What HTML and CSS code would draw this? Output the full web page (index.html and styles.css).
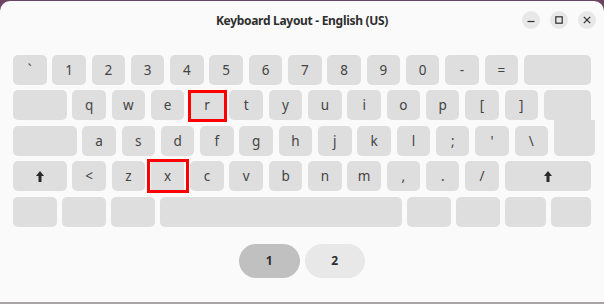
FILE: index.html
```html
<!DOCTYPE html>
<html lang="en">
<head>
<meta charset="utf-8">
<title>Keyboard Layout - English (US)</title>
<link rel="stylesheet" href="styles.css">
</head>
<body>
<div class="window">
  <header class="titlebar">
    <div class="spacer"></div>
    <div class="title">Keyboard Layout - English (US)</div>
    <div class="controls">
      <button class="wbtn" aria-label="Minimize"><svg width="10" height="10" viewBox="0 0 10 10"><path d="M1.5 6.5h7" stroke="#2e2e2e" stroke-width="1.2" fill="none"/></svg></button>
      <button class="wbtn" aria-label="Maximize"><svg width="10" height="10" viewBox="0 0 10 10"><rect x="1.8" y="1.8" width="6.4" height="6.4" stroke="#2e2e2e" stroke-width="1.2" fill="none"/></svg></button>
      <button class="wbtn" aria-label="Close"><svg width="10" height="10" viewBox="0 0 10 10"><path d="M1.8 1.8l6.4 6.4M8.2 1.8l-6.4 6.4" stroke="#2e2e2e" stroke-width="1.2" fill="none"/></svg></button>
    </div>
  </header>
  <main class="content">
    <div class="keyboard">
      <div class="row">
        <div class="key">`</div><div class="key">1</div><div class="key">2</div><div class="key">3</div><div class="key">4</div><div class="key">5</div><div class="key">6</div><div class="key">7</div><div class="key">8</div><div class="key">9</div><div class="key">0</div><div class="key">-</div><div class="key">=</div><div class="key fill"></div>
      </div>
      <div class="row">
        <div class="key tab"></div><div class="key">q</div><div class="key">w</div><div class="key">e</div><div class="key hl hl-r">r</div><div class="key">t</div><div class="key">y</div><div class="key">u</div><div class="key">i</div><div class="key">o</div><div class="key">p</div><div class="key">[</div><div class="key">]</div><div class="key fill ret-top"></div>
      </div>
      <div class="row">
        <div class="key caps"></div><div class="key">a</div><div class="key">s</div><div class="key">d</div><div class="key">f</div><div class="key">g</div><div class="key">h</div><div class="key">j</div><div class="key">k</div><div class="key">l</div><div class="key">;</div><div class="key">'</div><div class="key">\</div><div class="key ret-bot"></div>
      </div>
      <div class="row">
        <div class="key lshift"><svg class="arrow" width="8" height="11" viewBox="0 0 8 11"><path d="M4 0L8 5H5.5V11H2.5V5H0Z" fill="#2a2a2a"/></svg></div><div class="key">&lt;</div><div class="key">z</div><div class="key hl hl-x">x</div><div class="key">c</div><div class="key">v</div><div class="key">b</div><div class="key">n</div><div class="key">m</div><div class="key">,</div><div class="key">.</div><div class="key">/</div><div class="key fill"><svg class="arrow" width="8" height="11" viewBox="0 0 8 11"><path d="M4 0L8 5H5.5V11H2.5V5H0Z" fill="#2a2a2a"/></svg></div>
      </div>
      <div class="row bottom">
        <div class="key mod"></div><div class="key mod"></div><div class="key mod"></div><div class="key fill"></div><div class="key mod"></div><div class="key mod"></div><div class="key small"></div><div class="key small"></div>
      </div>
    </div>
    <div class="pager">
      <button class="page active">1</button>
      <button class="page">2</button>
    </div>
  </main>
</div>
</body>
</html>
```
FILE: styles.css
```css
html {
  background: #6a4460;
}
body {
  margin: 0;
  width: 604px;
  height: 304px;
  overflow: hidden;
}
.window {
  margin-top: 1px;
  height: 301px;
  background: #fafafa;
  border-radius: 10px 10px 0 0;
  border-bottom: 2px solid #a9a5a6;
  display: flex;
  flex-direction: column;
  font-family: "Noto Sans", "Open Sans", sans-serif;
}
.titlebar {
  height: 37px;
  display: grid;
  grid-template-columns: 1fr auto 1fr;
  align-items: center;
}
.title {
  font-weight: 700;
  font-size: 12px;
  letter-spacing: -0.3px;
  color: #2e2e2e;
  padding-top: 1px;
}
.controls {
  justify-self: end;
  display: flex;
  gap: 10px;
  padding-right: 8px;
}
.wbtn {
  width: 18px;
  height: 18px;
  border: none;
  border-radius: 50%;
  background: #e8e8e8;
  padding: 0;
  display: flex;
  align-items: center;
  justify-content: center;
}
.content {
  display: flex;
  flex-direction: column;
}
.keyboard {
  margin-top: 17px;
  padding: 0 13px;
  display: flex;
  flex-direction: column;
  gap: 5.4px;
}
.row {
  display: flex;
  gap: 5.8px;
  height: 30px;
}
.row.bottom {
  gap: 5px;
}
.key {
  flex: none;
  width: 33.5px;
  background: #dedede;
  border-radius: 5px;
  display: flex;
  align-items: center;
  justify-content: center;
  font-size: 13.5px;
  color: #444444;
  position: relative;
}
.tab, .lshift { width: 53.5px; }
.caps { width: 63.5px; }
.fill { flex: 1; }
.mod { width: 44px; }
.small { width: 40.5px; }
.ret-top {
  border-bottom-right-radius: 0;
}
.ret-bot {
  width: 41px;
  margin-left: auto;
  border-top-left-radius: 0;
  border-top-right-radius: 0;
}
.ret-bot::before {
  content: "";
  position: absolute;
  left: 0;
  right: 0;
  top: -6px;
  height: 7px;
  background: #dedede;
}
.hl {
  border-radius: 0;
}
.hl::after {
  content: "";
  position: absolute;
  border: 3px solid #ff0000;
}
.hl-r::after {
  left: -2px;
  right: -3.5px;
  top: -0.5px;
  bottom: -1.5px;
}
.hl-x::after {
  left: -3.5px;
  right: -5px;
  top: -2px;
  bottom: -2px;
}
.pager {
  margin-top: 17.6px;
  display: flex;
  justify-content: center;
  gap: 5px;
}
.page {
  width: 60.5px;
  height: 33.5px;
  border: none;
  border-radius: 17px;
  background: #e8e8e8;
  font-family: "Noto Sans", "Open Sans", sans-serif;
  font-weight: 700;
  font-size: 12px;
  color: #2e2e2e;
  padding: 0;
}
.page.active {
  background: #c0c0c0;
}
```
